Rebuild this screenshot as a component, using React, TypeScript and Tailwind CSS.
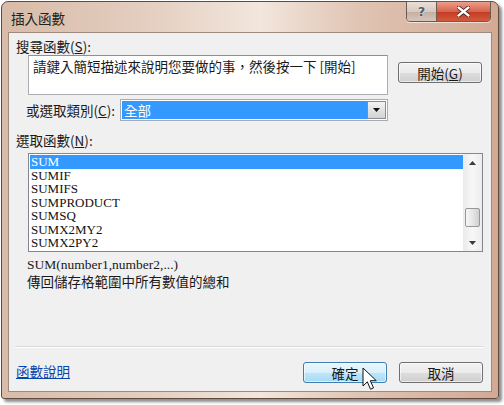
import type { ReactNode } from "react";

const cjk = "font-['Noto_Sans_CJK_TC','Liberation_Sans',sans-serif]";
const serif = "font-['Liberation_Serif','Noto_Sans_CJK_TC',serif]";

const functions = [
  "SUM",
  "SUMIF",
  "SUMIFS",
  "SUMPRODUCT",
  "SUMSQ",
  "SUMX2MY2",
  "SUMX2PY2",
];

export default function App() {
  return (
    <div className={`relative h-[405px] w-[504px] overflow-hidden bg-white ${cjk} text-[13.5px] text-[#1a1a1a]`}>
      <div className="ml-px mt-px flex h-[398px] w-[498px] flex-col rounded-t-[7px] rounded-b-[3px] border border-[#5e4a3f] bg-[linear-gradient(90deg,#d8bba8,#e4cfc1_30%,#f2e6dd_52%,#e0c4b3_72%,#d2a993)] pb-[6px] shadow-[3px_3px_3px_rgba(0,0,0,0.45)]">
        <TitleBar />

        {/* client area */}
        <div className="ml-[6px] mr-[6px] flex flex-1 flex-col border border-[#9e8a7e] bg-[#f0f0f0]">
          <div className="pl-[7px] pt-[6px] leading-[15px]">
            搜尋函數(<u>S</u>):
          </div>

          <div className="mt-px flex items-start">
            <div className="ml-[19px] h-[40px] w-[360px] border border-[#abadb3] border-t-[#8e8f8f] bg-white pl-[4px] pt-[2px] leading-[16px]">
              請鍵入簡短描述來說明您要做的事，然後按一下 [開始]
            </div>
            <Button className="ml-[10px] mt-[7px]">
              開始(<u>G</u>)
            </Button>
          </div>

          <div className="mt-[4px] flex items-center">
            <div className="w-[111px] pl-[17px] leading-[16px]">
              或選取類別(<u>C</u>):
            </div>
            <div className="flex h-[22px] w-[268px] border border-[#a5acb5] bg-white p-px">
              <div className="flex-1 bg-[#3399ff] pl-[2px] leading-[18px] text-white">全部</div>
              <div className="flex w-[19px] items-center justify-center border border-[#8c8c8c] bg-[linear-gradient(180deg,#f4f4f4,#e2e2e2_50%,#d4d4d4)]">
                <svg width="7" height="4" viewBox="0 0 7 4">
                  <path d="M0 0h7L3.5 4z" fill="#111" />
                </svg>
              </div>
            </div>
          </div>

          <div className="mt-[11px] pl-[7px] leading-[16px]">
            選取函數(<u>N</u>):
          </div>

          <div className="ml-[19px] mt-[5px] flex h-[99px] w-[455px] border border-[#828790] bg-white">
            <div className={`flex-1 pl-px pt-px ${serif} text-[13px]`}>
              {functions.map((f, i) => (
                <div
                  key={f}
                  className={
                    i === 0
                      ? "h-[13.5px] bg-[#3399ff] pl-px leading-[13.5px] text-white"
                      : "h-[13.5px] pl-px leading-[13.5px] text-[#111]"
                  }
                >
                  {f}
                </div>
              ))}
            </div>
            <ScrollBar />
          </div>

          <div className={`mt-[5px] pl-[18px] ${serif} text-[13.5px] leading-[15px]`}>
            SUM(number1,number2,...)
          </div>
          <div className="mt-px pl-[18px] leading-[16px]">傳回儲存格範圍中所有數值的總和</div>

          <div className="ml-[6px] mt-[57px] h-px w-[468px] bg-[#dadada]" />
          <div className="ml-[6px] h-px w-[468px] bg-white" />

          <div className="mt-[14px] flex items-center pr-[8px]">
            <a className="-mt-[3px] pl-[7px] leading-[16px] text-[#0645ad] underline">函數說明</a>
            <Button focused className="ml-auto">
              確定
            </Button>
            <Button className="ml-[12px]">取消</Button>
          </div>
        </div>
      </div>

      {/* mouse pointer over the OK button */}
      <svg className="absolute left-[362px] top-[367px]" width="15" height="24" viewBox="0 0 15 24">
        <path
          d="M1 1v18l4.3-4.2 3.2 7.4 3-1.3-3.2-7.2h6z"
          fill="#fff"
          stroke="#111"
          strokeWidth="1"
          strokeLinejoin="round"
        />
      </svg>
    </div>
  );
}

function TitleBar() {
  return (
    <div className="flex h-[30px] items-start justify-between">
      <div className="pl-[9px] pt-[8px] leading-[17px] text-[#222]">插入函數</div>
      <div className="-mt-px mr-[7px] flex h-[21px] overflow-hidden rounded-b-[4px] border border-[#6d5a50] shadow-[0_1px_0_rgba(255,255,255,0.6)]">
        <div className="flex w-[30px] items-center justify-center border-r border-[#6d5a50] bg-[linear-gradient(180deg,#eadfd8,#d9c8be_50%,#c4ada1_51%,#d8c6bb)] font-['DejaVu_Sans',sans-serif] text-[13px] font-bold text-[#575b63] [text-shadow:0_0_2px_#fff]">
          ?
        </div>
        <div className="flex w-[53px] items-center justify-center bg-[linear-gradient(180deg,#e9a08c,#d9624a_50%,#c23a22_51%,#d45a3c)]">
          <svg width="13" height="11" viewBox="0 0 13 11">
            <path d="M1.5 1.5l10 8M11.5 1.5l-10 8" stroke="#3b1a12" strokeWidth="4" strokeLinecap="round" />
            <path d="M1.5 1.5l10 8M11.5 1.5l-10 8" stroke="#fff" strokeWidth="2.4" strokeLinecap="round" />
          </svg>
        </div>
      </div>
    </div>
  );
}

function ScrollBar() {
  return (
    <div className="flex w-[19px] flex-col items-center bg-[linear-gradient(90deg,#eaeaea,#f7f7f7_50%,#ececec)]">
      <div className="flex h-[17px] items-center justify-center">
        <svg width="7" height="4" viewBox="0 0 7 4">
          <path d="M0 4h7L3.5 0z" fill="#3a3a3a" />
        </svg>
      </div>
      <div className="mt-[37px] h-[19px] w-[15px] rounded-[2px] border border-[#979797] bg-[linear-gradient(90deg,#f6f6f6,#e6e6e6_50%,#cfcfcf)]" />
      <div className="mt-auto flex h-[17px] items-center justify-center">
        <svg width="7" height="4" viewBox="0 0 7 4">
          <path d="M0 0h7L3.5 4z" fill="#3a3a3a" />
        </svg>
      </div>
    </div>
  );
}

function Button({
  children,
  className = "",
  focused = false,
}: {
  children: ReactNode;
  className?: string;
  focused?: boolean;
}) {
  return (
    <div
      className={
        focused
          ? `flex h-[21px] w-[84px] items-center justify-center rounded-[3px] border border-[#3c7fb1] bg-[linear-gradient(180deg,#eaf6fd,#d9f0fc_50%,#bee6fd_51%,#a7d9f5)] leading-[16px] shadow-[inset_0_0_0_1px_rgba(255,255,255,0.6)] ${className}`
          : `flex h-[21px] w-[84px] items-center justify-center rounded-[3px] border border-[#707070] bg-[linear-gradient(180deg,#f2f2f2,#ebebeb_50%,#dddddd_51%,#cfcfcf)] leading-[16px] shadow-[inset_0_0_0_1px_rgba(255,255,255,0.6)] ${className}`
      }
    >
      {children}
    </div>
  );
}
